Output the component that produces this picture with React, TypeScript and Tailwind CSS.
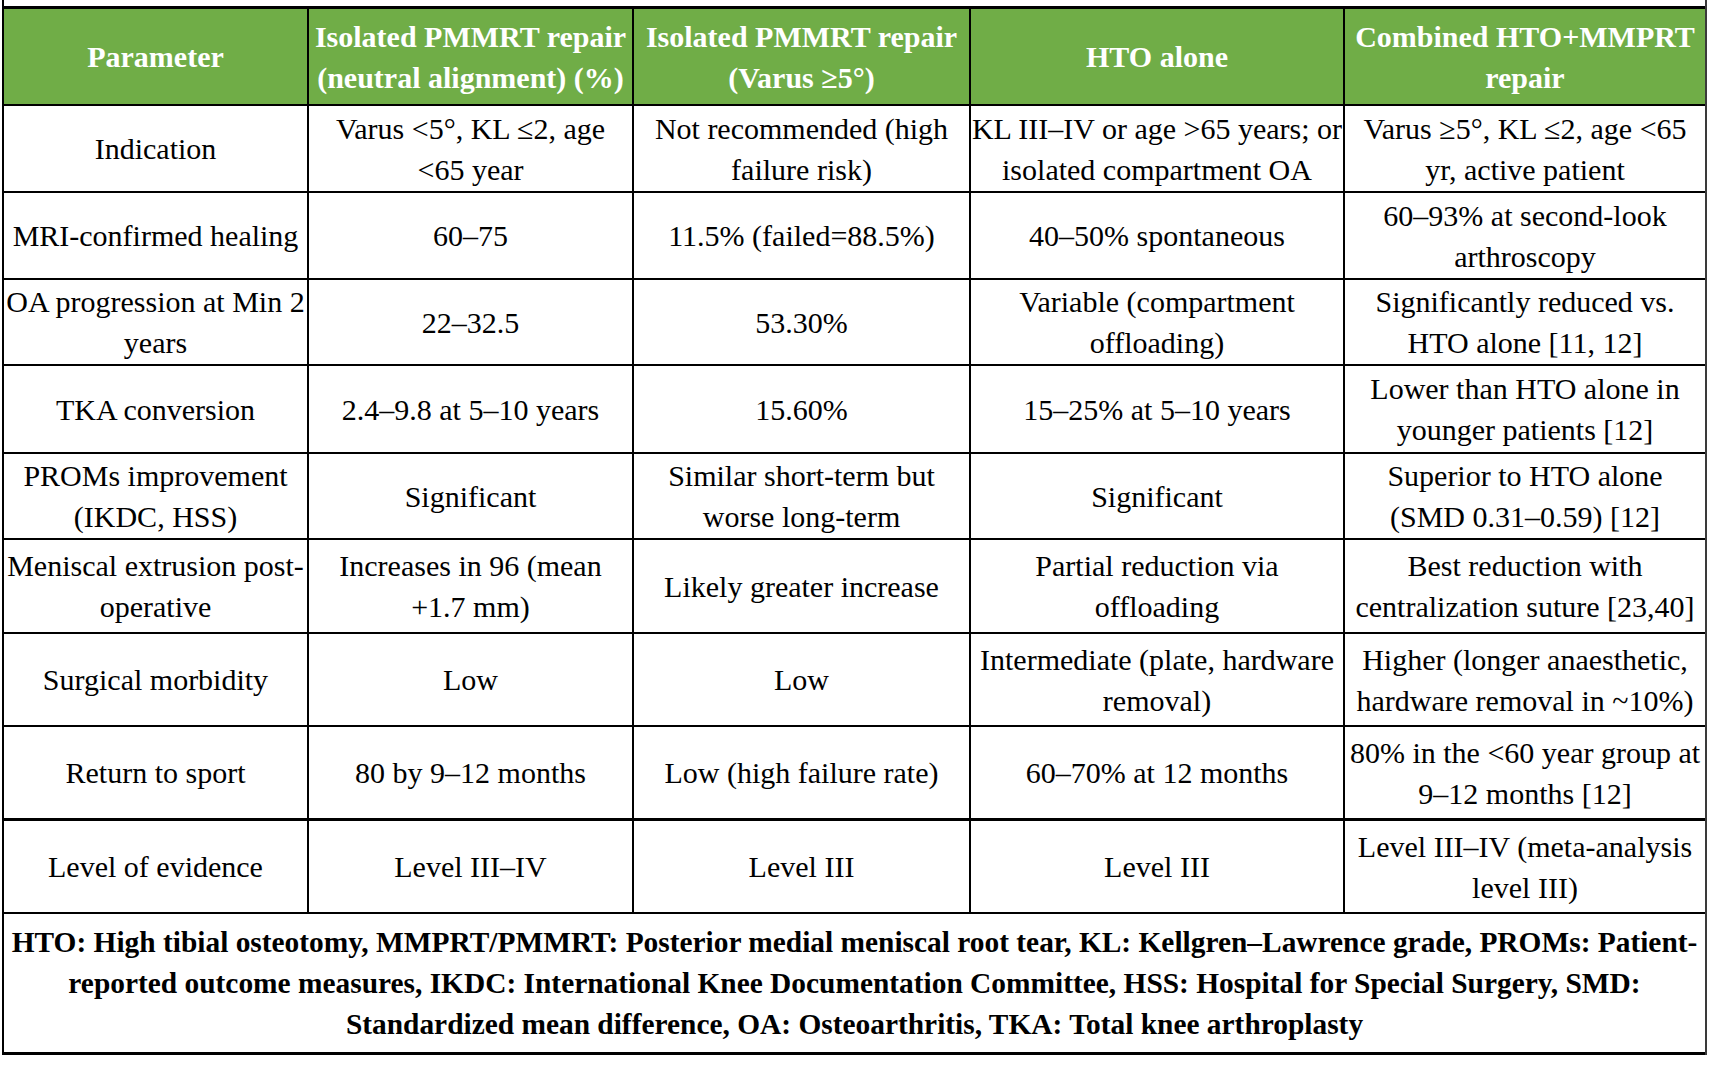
import React from "react";

type Row = { h: string; cells: string[][]; thick?: boolean };

const header: string[][] = [
  ["Parameter"],
  ["Isolated PMMRT repair", "(neutral alignment) (%)"],
  ["Isolated PMMRT repair", "(Varus \u22655\u00b0)"],
  ["HTO alone"],
  ["Combined HTO+MMPRT", "repair"],
];

const rows: Row[] = [
  {
    h: "h-[87px]",
    cells: [
      ["Indication"],
      ["Varus <5\u00b0, KL \u22642, age", "<65 year"],
      ["Not recommended (high", "failure risk)"],
      ["KL III\u2013IV or age >65 years; or", "isolated compartment OA"],
      ["Varus \u22655\u00b0, KL \u22642, age <65", "yr, active patient"],
    ],
  },
  {
    h: "h-[87px]",
    cells: [
      ["MRI-confirmed healing"],
      ["60\u201375"],
      ["11.5% (failed=88.5%)"],
      ["40\u201350% spontaneous"],
      ["60\u201393% at second-look", "arthroscopy"],
    ],
  },
  {
    h: "h-[86px]",
    cells: [
      ["OA progression at Min 2", "years"],
      ["22\u201332.5"],
      ["53.30%"],
      ["Variable (compartment", "offloading)"],
      ["Significantly reduced vs.", "HTO alone [11, 12]"],
    ],
  },
  {
    h: "h-[88px]",
    cells: [
      ["TKA conversion"],
      ["2.4\u20139.8 at 5\u201310 years"],
      ["15.60%"],
      ["15\u201325% at 5\u201310 years"],
      ["Lower than HTO alone in", "younger patients [12]"],
    ],
  },
  {
    h: "h-[86px]",
    cells: [
      ["PROMs improvement", "(IKDC, HSS)"],
      ["Significant"],
      ["Similar short-term but", "worse long-term"],
      ["Significant"],
      ["Superior to HTO alone", "(SMD 0.31\u20130.59) [12]"],
    ],
  },
  {
    h: "h-[94px]",
    cells: [
      ["Meniscal extrusion post-", "operative"],
      ["Increases in 96 (mean", "+1.7 mm)"],
      ["Likely greater increase"],
      ["Partial reduction via", "offloading"],
      ["Best reduction with", "centralization suture [23,40]"],
    ],
  },
  {
    h: "h-[93px]",
    cells: [
      ["Surgical morbidity"],
      ["Low"],
      ["Low"],
      ["Intermediate (plate, hardware", "removal)"],
      ["Higher (longer anaesthetic,", "hardware removal in ~10%)"],
    ],
  },
  {
    h: "h-[94px]",
    thick: true,
    cells: [
      ["Return to sport"],
      ["80 by 9\u201312 months"],
      ["Low (high failure rate)"],
      ["60\u201370% at 12 months"],
      ["80% in the <60 year group at", "9\u201312 months [12]"],
    ],
  },
  {
    h: "h-[93px]",
    cells: [
      ["Level of evidence"],
      ["Level III\u2013IV"],
      ["Level III"],
      ["Level III"],
      ["Level III\u2013IV (meta-analysis", "level III)"],
    ],
  },
];

const widths = ["w-[305px]", "w-[325px]", "w-[337px]", "w-[374px]", "w-[360px]"];

function Lines({ lines }: { lines: string[] }) {
  return (
    <div className="text-center whitespace-nowrap">
      {lines.map((l, i) => (
        <div key={i}>{l}</div>
      ))}
    </div>
  );
}

export default function App() {
  return (
    <div className="w-[1716px] h-[1068px] bg-white text-black font-['Liberation_Serif','Times_New_Roman',serif] text-[30px] leading-[41px]">
      <div className="ml-[2px] w-[1705px] border-l-2 border-r-2 border-l-black border-r-[#3a3a3a]">
        <div className="h-[6px]" />
        <div className="border-t-[3px] border-black">
          <div className="flex h-[97px] bg-[#70ad47] text-white font-bold border-b-2 border-black">
            {header.map((c, i) => (
              <div
                key={i}
                className={`${widths[i]} shrink-0 flex items-center justify-center ${i < 4 ? "border-r-2 border-black" : ""}`}
              >
                <Lines lines={c} />
              </div>
            ))}
          </div>
          {rows.map((r, ri) => (
            <div
              key={ri}
              className={`flex ${r.h} border-black ${r.thick ? "border-b-[3px]" : "border-b-2"}`}
            >
              {r.cells.map((c, i) => (
                <div
                  key={i}
                  className={`${widths[i]} shrink-0 flex items-center justify-center px-[2px] ${i < 4 ? "border-r-2 border-black" : ""}`}
                >
                  <Lines lines={c} />
                </div>
              ))}
            </div>
          ))}
        </div>
        <div className="h-[141px] border-b-[3px] border-black flex items-center justify-center pt-[1px] font-bold text-center whitespace-nowrap text-[29.4px]">
          <div>
            <div>HTO: High tibial osteotomy, MMPRT/PMMRT: Posterior medial meniscal root tear, KL: Kellgren–Lawrence grade, PROMs: Patient-</div>
            <div>reported outcome measures, IKDC: International Knee Documentation Committee, HSS: Hospital for Special Surgery, SMD:</div>
            <div>Standardized mean difference, OA: Osteoarthritis, TKA: Total knee arthroplasty</div>
          </div>
        </div>
      </div>
    </div>
  );
}
